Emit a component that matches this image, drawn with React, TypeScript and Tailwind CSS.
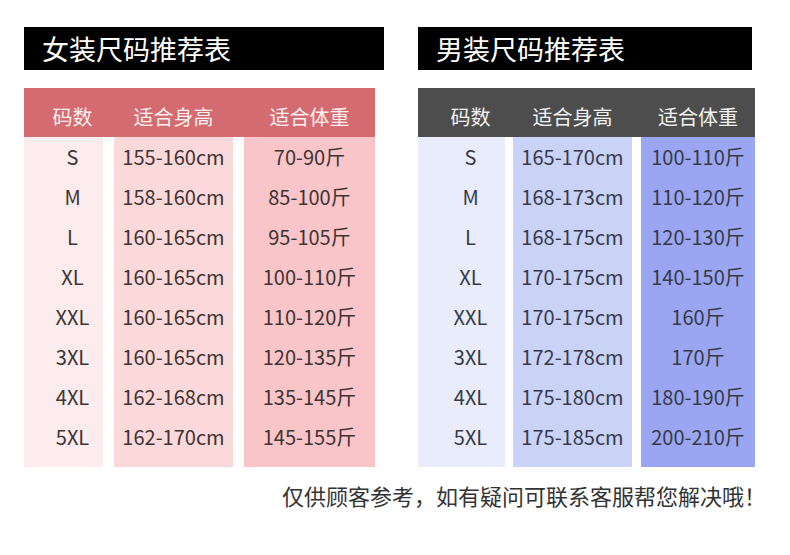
const women = [
  ["S", "155-160cm", "70-90斤"],
  ["M", "158-160cm", "85-100斤"],
  ["L", "160-165cm", "95-105斤"],
  ["XL", "160-165cm", "100-110斤"],
  ["XXL", "160-165cm", "110-120斤"],
  ["3XL", "160-165cm", "120-135斤"],
  ["4XL", "162-168cm", "135-145斤"],
  ["5XL", "162-170cm", "145-155斤"],
];

const men = [
  ["S", "165-170cm", "100-110斤"],
  ["M", "168-173cm", "110-120斤"],
  ["L", "168-175cm", "120-130斤"],
  ["XL", "170-175cm", "140-150斤"],
  ["XXL", "170-175cm", "160斤"],
  ["3XL", "172-178cm", "170斤"],
  ["4XL", "175-180cm", "180-190斤"],
  ["5XL", "175-185cm", "200-210斤"],
];

type Theme = {
  title: string;
  titleW: string;
  headBg: string;
  headText: string;
  cols: { w: string; bg: string; pad: string }[];
  gaps: [string, string];
  rows: string[][];
  text: string;
};

const themes: Theme[] = [
  {
    title: "女装尺码推荐表",
    titleW: "w-[360px]",
    headBg: "bg-[#d46b70]",
    headText: "text-[#fdf0f0]",
    cols: [
      { w: "w-[79px]", bg: "bg-[#fdeced]", pad: "pl-[18px]" },
      { w: "w-[119px]", bg: "bg-[#fbd8da]", pad: "" },
      { w: "w-[131px]", bg: "bg-[#f9c5c8]", pad: "" },
    ],
    gaps: ["ml-[11px]", "ml-[11px]"],
    rows: women,
    text: "text-[#3d3434]",
  },
  {
    title: "男装尺码推荐表",
    titleW: "w-[334px]",
    headBg: "bg-[#4d4d4d]",
    headText: "text-[#f2f2f2]",
    cols: [
      { w: "w-[87px]", bg: "bg-[#e9ecfb]", pad: "pl-[18px]" },
      { w: "w-[119px]", bg: "bg-[#cad2f7]", pad: "" },
      { w: "w-[114px]", bg: "bg-[#9aa6f1]", pad: "" },
    ],
    gaps: ["ml-[8px]", "ml-[9px]"],
    rows: men,
    text: "text-[#363a48]",
  },
];

const heads = ["码数", "适合身高", "适合体重"];

function SizeTable({ t }: { t: Theme }) {
  return (
    <div className="flex flex-col">
      <div
        className={`${t.titleW} h-[43px] bg-black flex items-center pl-[18px] text-[27px] text-white leading-none`}
      >
        {t.title}
      </div>
      <div className={`mt-[18px] flex h-[49px] pt-[8px] ${t.headBg} ${t.headText} w-fit`}>
        {t.cols.map((c, i) => (
          <div
            key={i}
            className={`${c.w} ${c.pad} ${i > 0 ? t.gaps[i - 1] : ""} flex items-center justify-center text-[20px]`}
          >
            {heads[i]}
          </div>
        ))}
      </div>
      <div className="flex">
        {t.cols.map((c, i) => (
          <div
            key={i}
            className={`${c.w} ${c.bg} ${i > 0 ? t.gaps[i - 1] : ""} flex flex-col pb-[10px]`}
          >
            {t.rows.map((r, j) => (
              <div
                key={j}
                className={`h-[40px] ${c.pad} flex items-center justify-center text-[20px] ${t.text}`}
              >
                {r[i]}
              </div>
            ))}
          </div>
        ))}
      </div>
    </div>
  );
}

export default function App() {
  return (
    <div
      className="w-[790px] h-[555px] bg-white flex flex-col"
      style={{ fontFamily: '"Noto Sans CJK SC", "Noto Sans", sans-serif' }}
    >
      <div className="flex pt-[27px] pl-[24px] gap-[34px]">
        {themes.map((t) => (
          <SizeTable key={t.title} t={t} />
        ))}
      </div>
      <div className="flex justify-end pr-[24px] mt-[12px] text-[22px] text-[#333333]">
        仅供顾客参考，如有疑问可联系客服帮您解决哦！
      </div>
    </div>
  );
}
